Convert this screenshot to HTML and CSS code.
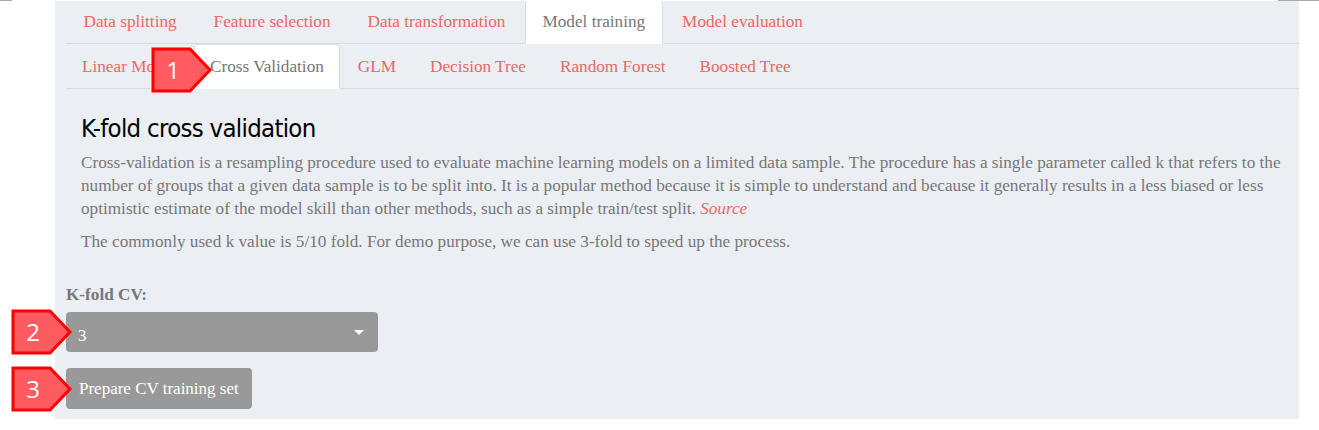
FILE: index.html
```html
<!DOCTYPE html>
<html>
<head>
<meta charset="utf-8">
<link rel="stylesheet" href="styles.css">
</head>
<body>
<div class="topline-left"></div>
<div class="topline-right"></div>
<div class="panel">
  <ul class="tabs tabs-main">
    <li><a>Data splitting</a></li>
    <li><a>Feature selection</a></li>
    <li><a>Data transformation</a></li>
    <li class="active"><a>Model training</a></li>
    <li><a>Model evaluation</a></li>
  </ul>
  <ul class="tabs tabs-sub">
    <li><a>Linear Model</a></li>
    <li class="active"><a>Cross Validation</a></li>
    <li><a>GLM</a></li>
    <li><a>Decision Tree</a></li>
    <li><a>Random Forest</a></li>
    <li><a>Boosted Tree</a></li>
  </ul>
  <div class="content">
    <h2>K-fold cross validation</h2>
    <p>Cross-validation is a resampling procedure used to evaluate machine learning models on a limited data sample. The procedure has a single parameter called k that refers to the number of groups that a given data sample is to be split into. It is a popular method because it is simple to understand and because it generally results in a less biased or less optimistic estimate of the model skill than other methods, such as a simple train/test split. <em class="src">Source</em></p>
    <p>The commonly used k value is 5/10 fold. For demo purpose, we can use 3-fold to speed up the process.</p>
  </div>
  <div class="form">
    <label class="lbl">K-fold CV:</label>
    <div class="select"><span>3</span><span class="caret"></span></div>
    <button class="btn">Prepare CV training set</button>
  </div>
</div>

<svg class="callout c1" width="62" height="46" viewBox="0 0 62 46">
  <polygon points="2,2 39,2 59,23 39,44 2,44" fill="#ff5b60" stroke="#ff0000" stroke-width="3"/>
  <text x="22" y="32" text-anchor="middle">1</text>
</svg>
<svg class="callout c2" width="62" height="46" viewBox="0 0 62 46">
  <polygon points="2,2 39,2 59,23 39,44 2,44" fill="#ff5b60" stroke="#ff0000" stroke-width="3"/>
  <text x="22" y="32" text-anchor="middle">2</text>
</svg>
<svg class="callout c3" width="62" height="46" viewBox="0 0 62 46">
  <polygon points="2,2 39,2 59,23 39,44 2,44" fill="#ff5b60" stroke="#ff0000" stroke-width="3"/>
  <text x="22" y="32" text-anchor="middle">3</text>
</svg>
</body>
</html>
```

FILE: styles.css
```css
html, body {
  margin: 0;
  padding: 0;
  background: #ffffff;
}
body {
  position: relative;
  width: 1319px;
  height: 430px;
  overflow: hidden;
  font-family: "Liberation Serif", "Times New Roman", serif;
  font-size: 17.2px;
  color: #777777;
}
.topline-left {
  position: absolute;
  left: 0;
  top: 0;
  width: 12px;
  height: 1px;
  background: #aaaaaa;
}
.topline-right {
  position: absolute;
  left: 1278px;
  top: 0;
  width: 41px;
  height: 1px;
  background: #aaaaaa;
}
.panel {
  margin: 1px 0 0 55px;
  width: 1244px;
  height: 418px;
  background: #ebeef3;
  padding-left: 11px;
  box-sizing: border-box;
}
.tabs {
  list-style: none;
  margin: 0;
  padding: 0;
  display: flex;
  border-bottom: 1px solid #d9dcdf;
}
.tabs li {
  margin-right: 2px;
  margin-bottom: -1px;
}
.tabs a {
  display: block;
  padding: 0 16px;
  color: #eb6864;
  border: 1px solid transparent;
  border-radius: 4px 4px 0 0;
  white-space: nowrap;
}
.tabs-main a {
  height: 41px;
  line-height: 40px;
  padding: 0 16.5px;
}
.tabs-sub a {
  height: 43px;
  line-height: 44px;
  padding: 0 15px;
}
.tabs li.active a {
  background: #ffffff;
  color: #777777;
  border-color: #dddddd;
  border-bottom-color: transparent;
}
.tabs-main li.active a {
  border-top-color: transparent;
}
.content {
  padding: 0 10px 0 15px;
}
h2 {
  margin: 23px 0 7px 0;
  font-family: "DejaVu Sans Condensed", "DejaVu Sans", sans-serif;
  font-weight: normal;
  font-size: 25.5px;
  letter-spacing: -0.7px;
  line-height: 32px;
  color: #000000;
}
p {
  margin: 0 0 10px 0;
  line-height: 23px;
}
.src {
  color: #eb6864;
}
.form {
  margin-top: 32px;
}
.lbl {
  display: block;
  font-weight: bold;
  color: #777777;
  line-height: 20px;
  margin-bottom: 7px;
}
.select {
  width: 312px;
  height: 40px;
  background: #999999;
  border-radius: 4px;
  color: #ffffff;
  display: flex;
  align-items: center;
  justify-content: space-between;
  padding: 0 14px 0 12px;
  box-sizing: border-box;
  font-size: 17px;
}
.select span:first-child {
  padding-top: 8px;
}
.caret {
  width: 0;
  height: 0;
  border-left: 5px solid transparent;
  border-right: 5px solid transparent;
  border-top: 5px solid #ffffff;
}
.btn {
  margin-top: 16px;
  height: 41px;
  padding: 0 13px;
  background: #999999;
  border: none;
  border-radius: 4px;
  color: #ffffff;
  font-family: "Liberation Serif", "Times New Roman", serif;
  font-size: 17px;
}
.callout {
  position: absolute;
}
.callout text {
  font-family: "Open Sans", "Liberation Sans", sans-serif;
  font-size: 24px;
  fill: #ffffff;
}
.c1 { left: 151px; top: 47px; }
.c2 { left: 11px; top: 309px; }
.c3 { left: 11px; top: 366px; }
```
